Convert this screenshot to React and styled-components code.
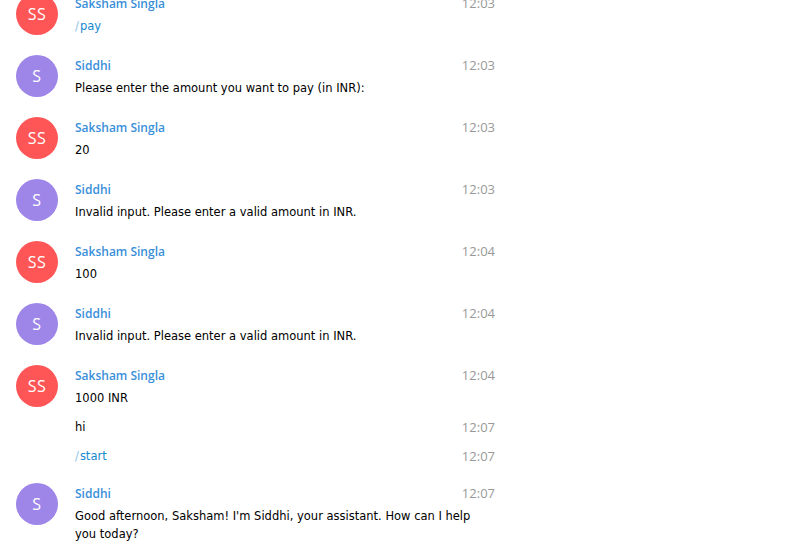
import React from "react";
import styled, { createGlobalStyle } from "styled-components";

const Global = createGlobalStyle`
  html, body { margin: 0; padding: 0; background: #fff; }
  body { font-family: "DejaVu Sans", Verdana, sans-serif; }
`;

const Page = styled.div`
  width: 792px;
  height: 544px;
  overflow: hidden;
  background: #fff;
`;

const List = styled.div`
  display: flex;
  flex-direction: column;
  width: 495px;
  margin-top: -17px;
`;

const Group = styled.div`
  display: flex;
  gap: 17px;
  padding: 10px 0 10px 16px;
`;

const Avatar = styled.div`
  flex: 0 0 42px;
  width: 42px;
  height: 42px;
  border-radius: 50%;
  background: ${(p) => p.$color};
  color: #fff;
  display: flex;
  align-items: center;
  justify-content: center;
  font-family: "Open Sans", sans-serif;
  font-size: 16px;
  letter-spacing: 0.5px;
`;

const Body = styled.div`
  flex: 1;
  display: flex;
  flex-direction: column;
  min-width: 0;
`;

const Head = styled.div`
  display: flex;
  justify-content: space-between;
  align-items: center;
  height: 20px;
  margin-bottom: 4px;
`;

const Name = styled.span`
  color: #3a8fd9;
  font-family: "Open Sans", sans-serif;
  font-weight: 600;
  font-size: 12px;
`;

const Time = styled.span`
  color: #999;
  font-family: "Open Sans", sans-serif;
  font-size: 13px;
`;

const Text = styled.div`
  color: #000;
  font-size: 11.5px;
  line-height: 18px;
  padding-right: 12px;
`;

const Extra = styled.div`
  display: flex;
  justify-content: space-between;
  align-items: center;
  padding-top: 11px;
  line-height: 18px;
  &:last-child {
    margin-bottom: -2px;
  }
`;

const Cmd = styled.span`
  color: #168acd;
  font-size: 11.5px;
  &::before {
    content: "/";
    color: #8ec3e8;
    margin-right: 1px;
  }
`;

const SS = { initials: "SS", name: "Saksham Singla", color: "#fe5656" };
const SI = { initials: "S", name: "Siddhi", color: "#9d86e8" };

const msgs = [
  { who: SS, time: "12:03", cmd: "pay" },
  { who: SI, time: "12:03", text: "Please enter the amount you want to pay (in INR):" },
  { who: SS, time: "12:03", text: "20" },
  { who: SI, time: "12:03", text: "Invalid input. Please enter a valid amount in INR." },
  { who: SS, time: "12:04", text: "100" },
  { who: SI, time: "12:04", text: "Invalid input. Please enter a valid amount in INR." },
  {
    who: SS,
    time: "12:04",
    text: "1000 INR",
    extra: [
      { time: "12:07", text: "hi" },
      { time: "12:07", cmd: "start" },
    ],
  },
  {
    who: SI,
    time: "12:07",
    text: "Good afternoon, Saksham! I'm Siddhi, your assistant. How can I help you today?",
  },
];

function Content({ m }) {
  return m.cmd ? <Cmd>{m.cmd}</Cmd> : <Text as="span">{m.text}</Text>;
}

export default function App() {
  return (
    <Page>
      <Global />
      <List>
        {msgs.map((m, i) => (
          <Group key={i}>
            <Avatar $color={m.who.color}>{m.who.initials}</Avatar>
            <Body>
              <Head>
                <Name>{m.who.name}</Name>
                <Time>{m.time}</Time>
              </Head>
              {m.cmd ? (
                <Text>
                  <Cmd>{m.cmd}</Cmd>
                </Text>
              ) : (
                <Text>{m.text}</Text>
              )}
              {(m.extra || []).map((e, j) => (
                <Extra key={j}>
                  <Content m={e} />
                  <Time>{e.time}</Time>
                </Extra>
              ))}
            </Body>
          </Group>
        ))}
      </List>
    </Page>
  );
}
